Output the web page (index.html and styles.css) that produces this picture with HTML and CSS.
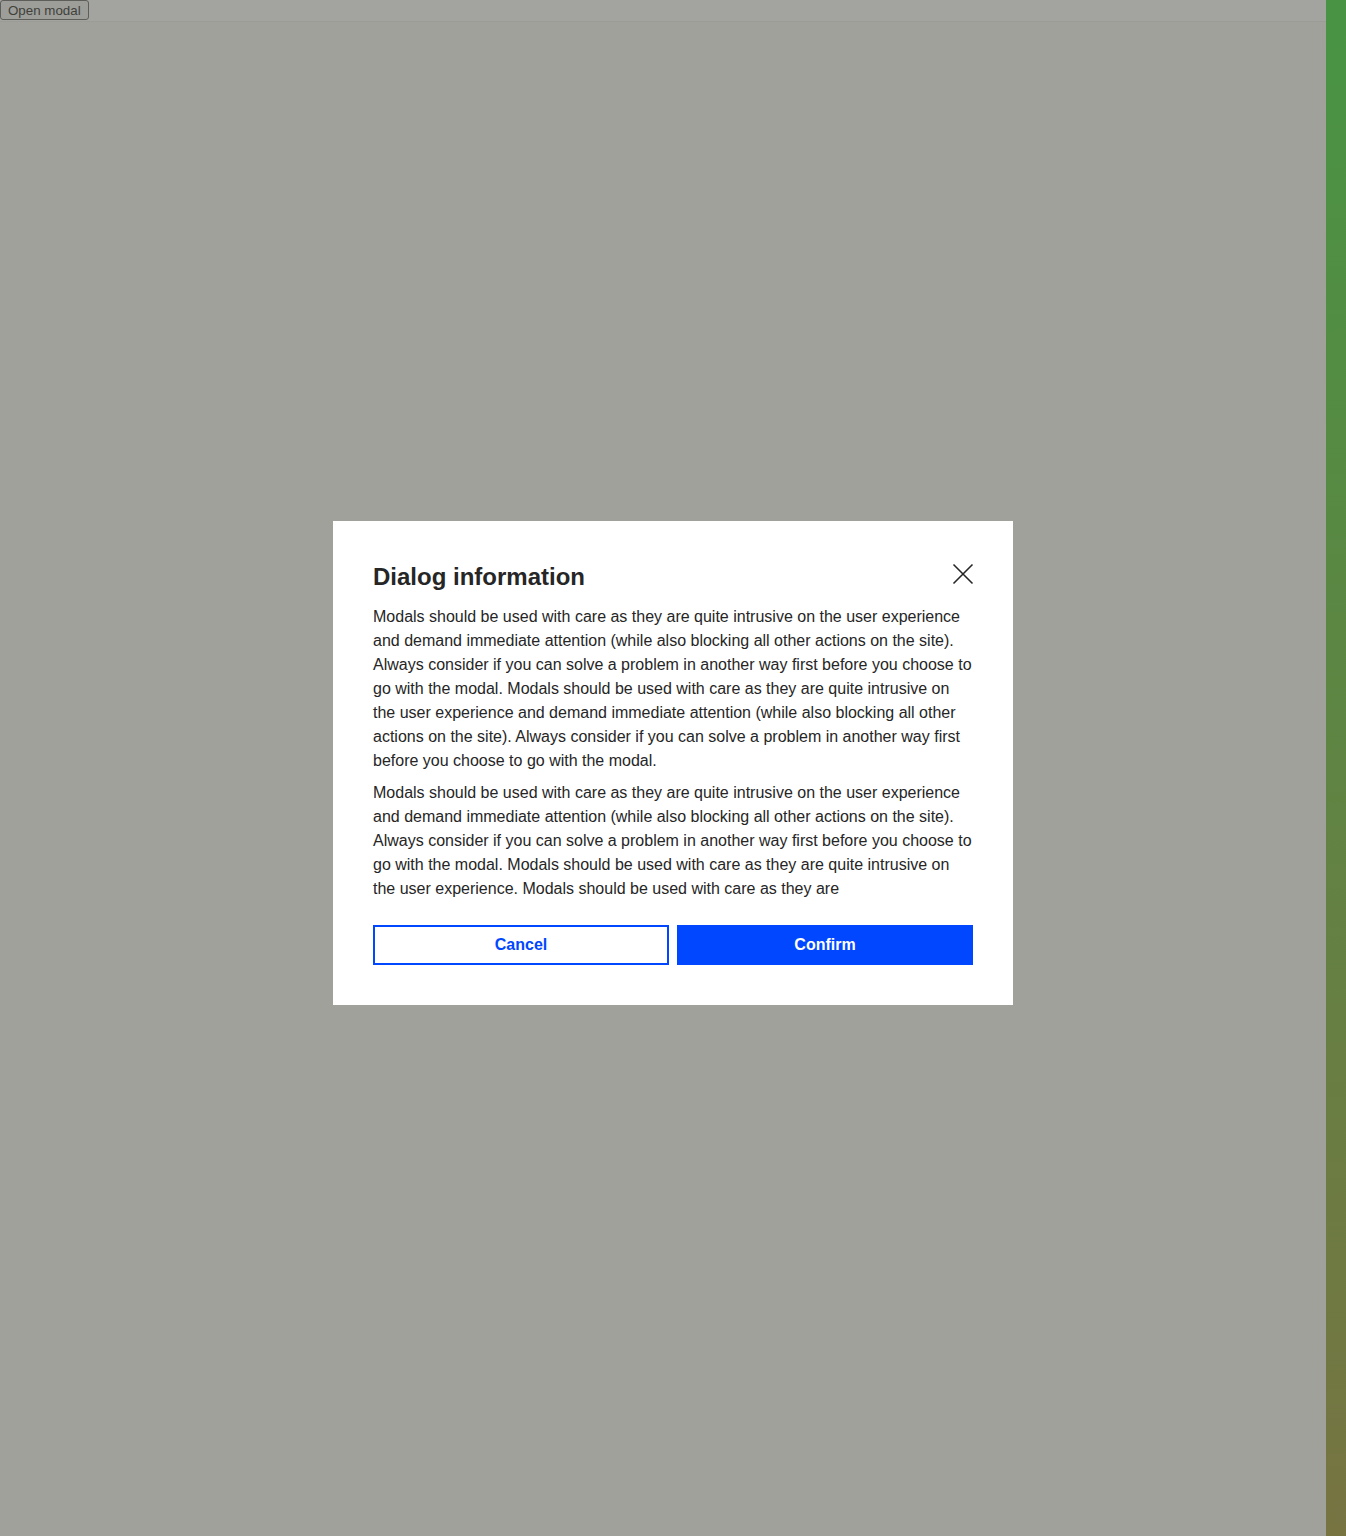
FILE: index.html
```html
<!DOCTYPE html>
<html lang="en">
<head>
<meta charset="utf-8">
<title>Dialog</title>
<link rel="stylesheet" href="styles.css">
</head>
<body>
<div class="page">
  <div class="topbar"><button class="open-btn" type="button">Open modal</button></div>
</div>
<div class="overlay">
  <div class="modal" role="dialog" aria-labelledby="dlg-title">
    <div class="modal-head">
      <h2 id="dlg-title" class="modal-title">Dialog information</h2>
      <button class="close-btn" type="button" aria-label="Close">
        <svg width="22" height="22" viewBox="0 0 22 22"><path d="M1.5 1.5 L20.5 20.5 M20.5 1.5 L1.5 20.5" stroke="#262626" stroke-width="1.6" fill="none"/></svg>
      </button>
    </div>
    <p class="modal-text">Modals should be used with care as they are quite intrusive on the user experience and demand immediate attention (while also blocking all other actions on the site). Always consider if you can solve a problem in another way first before you choose to go with the modal. Modals should be used with care as they are quite intrusive on the user experience and demand immediate attention (while also blocking all other actions on the site). Always consider if you can solve a problem in another way first before you choose to go with the modal.</p>
    <p class="modal-text">Modals should be used with care as they are quite intrusive on the user experience and demand immediate attention (while also blocking all other actions on the site). Always consider if you can solve a problem in another way first before you choose to go with the modal. Modals should be used with care as they are quite intrusive on the user experience. Modals should be used with care as they are</p>
    <div class="modal-actions">
      <button class="btn btn-secondary" type="button">Cancel</button>
      <button class="btn btn-primary" type="button">Confirm</button>
    </div>
  </div>
</div>
<div class="sidebar"></div>
</body>
</html>
```
FILE: styles.css
```css
html, body {
  margin: 0;
  padding: 0;
  height: 100%;
}
body {
  background: #fafaf8;
  font-family: "Liberation Sans", Arial, sans-serif;
}
.page {
  margin-right: 20px;
}
.topbar {
  height: 21px;
  background: #ffffff;
  border-bottom: 1px solid #f2f2f0;
}
.open-btn {
  display: block;
  margin: 0;
  height: 20px;
  padding: 0 7px;
  font-family: "Liberation Sans", Arial, sans-serif;
  font-size: 13.33px;
  color: #5a5a5a;
  background: #f6f6f6;
  border: 1px solid #8a8a8a;
  border-radius: 3px;
}
.sidebar {
  position: fixed;
  top: 0;
  right: 0;
  bottom: 0;
  width: 20px;
  background: linear-gradient(to bottom, #489444, #777442);
}
.overlay {
  position: fixed;
  inset: 0;
  background: rgba(25, 28, 15, 0.4);
  display: flex;
  align-items: center;
  justify-content: center;
}
.modal {
  width: 600px;
  padding: 40px;
  background: #ffffff;
  margin-bottom: 10px;
}
.modal-head {
  display: flex;
  justify-content: space-between;
  align-items: flex-start;
  margin-bottom: 12px;
}
.modal-title {
  margin: 0;
  font-family: "Liberation Sans", Arial, sans-serif;
  font-size: 24px;
  line-height: 32px;
  font-weight: 700;
  color: #262626;
}
.close-btn {
  margin: 2px -1px 0 0;
  padding: 0;
  border: 0;
  background: none;
  width: 22px;
  height: 22px;
  display: flex;
}
.modal-text {
  margin: 0 0 8px;
  font-size: 16px;
  line-height: 24px;
  color: #262626;
}
.modal-actions {
  display: flex;
  gap: 8px;
  margin-top: 24px;
}
.btn {
  flex: 1;
  height: 40px;
  margin: 0;
  font-family: "Liberation Sans", Arial, sans-serif;
  font-size: 16px;
  font-weight: 700;
  border: 2px solid #0047ff;
  cursor: pointer;
}
.btn-secondary {
  background: #ffffff;
  color: #0047ff;
}
.btn-primary {
  background: #0047ff;
  color: #ffffff;
}
```
